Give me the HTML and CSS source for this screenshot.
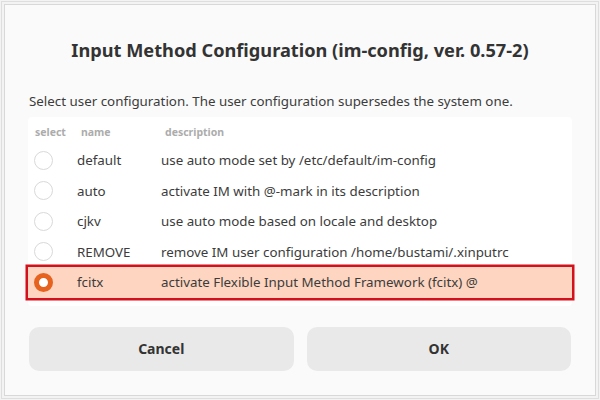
FILE: index.html
```html
<!DOCTYPE html>
<html>
<head>
<meta charset="utf-8">
<link rel="stylesheet" href="styles.css">
</head>
<body>
<div class="frame">
  <div class="dialog">
    <h1 class="title">Input Method Configuration (im-config, ver. 0.57-2)</h1>
    <p class="intro">Select user configuration. The user configuration supersedes the system one.</p>
    <div class="list">
      <div class="head">
        <span class="c-sel">select</span>
        <span class="c-name">name</span>
        <span class="c-desc">description</span>
      </div>
      <div class="row">
        <span class="c-sel"><span class="radio"></span></span>
        <span class="c-name">default</span>
        <span class="c-desc">use auto mode set by /etc/default/im-config</span>
      </div>
      <div class="row">
        <span class="c-sel"><span class="radio"></span></span>
        <span class="c-name">auto</span>
        <span class="c-desc">activate IM with @-mark in its description</span>
      </div>
      <div class="row">
        <span class="c-sel"><span class="radio"></span></span>
        <span class="c-name">cjkv</span>
        <span class="c-desc">use auto mode based on locale and desktop</span>
      </div>
      <div class="row">
        <span class="c-sel"><span class="radio"></span></span>
        <span class="c-name">REMOVE</span>
        <span class="c-desc">remove IM user configuration /home/bustami/.xinputrc</span>
      </div>
      <div class="row selected">
        <span class="c-sel"><span class="radio on"></span></span>
        <span class="c-name">fcitx</span>
        <span class="c-desc">activate Flexible Input Method Framework (fcitx) @</span>
      </div>
    </div>
    <div class="buttons">
      <button class="btn">Cancel</button>
      <button class="btn">OK</button>
    </div>
  </div>
</div>
</body>
</html>
```

FILE: styles.css
```css
html, body {
  margin: 0;
  padding: 0;
  background: #f3f3f3;
  font-family: "Noto Sans", "Open Sans", sans-serif;
  color: #3c3c3c;
}
.frame {
  margin: 1px;
  height: 398px;
  box-sizing: border-box;
  border: 1px solid #dedede;
  padding: 2px;
}
.dialog {
  height: 100%;
  box-sizing: border-box;
  border: 1px solid #d8d8d8;
  background: #fafafa;
  padding: 0 23px 0 23px;
  display: flex;
  flex-direction: column;
}
.title {
  margin: 32px 0 0 0;
  font-size: 18.2px;
  line-height: 26px;
  font-weight: 700;
  text-align: center;
  color: #333333;
}
.intro {
  margin: 29px 0 0 1px;
  font-size: 13.35px;
  line-height: 18px;
}
.list {
  margin-top: 7px;
  background: #ffffff;
  border-radius: 4px;
  padding: 1px 0 8px 0;
}
.head, .row {
  display: flex;
  align-items: center;
}
.head {
  height: 27px;
  font-size: 10.5px;
  font-weight: 700;
  color: #acacac;
}
.head .c-sel { width: 53px; padding-left: 7px; }
.head .c-name { width: 84px; }
.row {
  height: 30.5px;
  font-size: 13.35px;
}
.row .c-sel { width: 49px; padding-left: 6px; display: flex; align-items: center; }
.row .c-name { width: 84px; }
.c-sel, .c-name { box-sizing: border-box; flex: none; }
.radio {
  width: 19px;
  height: 19px;
  box-sizing: border-box;
  border: 1px solid #d9d9d9;
  border-radius: 50%;
  background: #ffffff;
  display: inline-block;
}
.radio.on {
  border: 5.5px solid #e5621f;
  background: #ffffff;
}
.selected {
  background: #fdd5c0;
  box-shadow: 0 0 0 2.5px #d3101b;
}
.buttons {
  margin-top: 21px;
  display: flex;
  gap: 13px;
  padding: 0 1px;
}
.btn {
  flex: 1;
  height: 44px;
  border: none;
  border-radius: 10px;
  background: #e9e9e9;
  font-family: "Noto Sans", "Open Sans", sans-serif;
  font-size: 14px;
  font-weight: 700;
  color: #333333;
}
```
